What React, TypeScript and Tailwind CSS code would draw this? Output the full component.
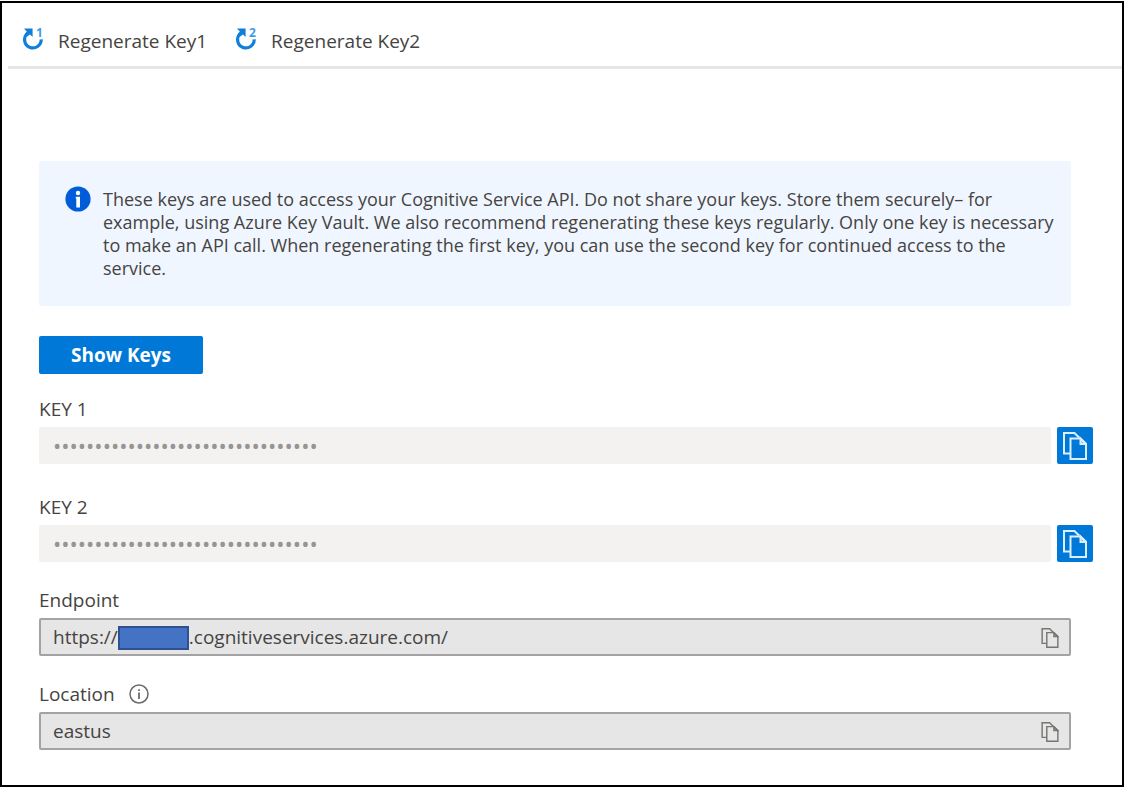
import { useId, type ReactNode } from "react";

const MASKED_KEY = "x".repeat(32);

function RegenerateIcon({ digit }: { digit: number }) {
  return (
    <svg viewBox="0 -4 24 32" className="h-8 w-6 shrink-0 overflow-visible" aria-hidden="true">
      <path
        d="M5.4 6.4A8.3 8.3 0 1 0 19.2 12.4"
        fill="none"
        stroke="#0f7fdb"
        strokeWidth="3.2"
      />
      <path d="M2 1.4H10.6V10L8 7.6 5.2 9.6 2.6 7.2 4.8 4.4Z" fill="#0f7fdb" />
      <text
        x="14"
        y="10"
        fontSize="12"
        fontWeight="700"
        fill="#3f9be4"
        fontFamily="'Open Sans', sans-serif"
      >
        {digit}
      </text>
    </svg>
  );
}

function CopyIcon({ className }: { className: string }) {
  return (
    <svg
      viewBox="0 0 24 28"
      className={className}
      fill="none"
      stroke="currentColor"
      strokeWidth="2"
      aria-hidden="true"
    >
      <path d="M7 21.5H1V1H11.5L16 5.5" />
      <path d="M7.5 6.5H17.5L23 12V27H7.5Z" />
      <path d="M17.5 6.5V12H23Z" fill="currentColor" fillOpacity="0.5" />
    </svg>
  );
}

function CommandButton({ digit }: { digit: number }) {
  return (
    <button type="button" className="flex items-center gap-3 text-[19px] leading-6">
      <RegenerateIcon digit={digit} />
      <span className="pt-1">Regenerate Key{digit}</span>
    </button>
  );
}

function KeyField({ label }: { label: string }) {
  const id = useId();
  return (
    <div>
      <label htmlFor={id} className="block text-[19px] leading-6">
        {label}
      </label>
      <div className="mt-[6px] flex gap-[6px]">
        <input
          id={id}
          type="password"
          readOnly
          value={MASKED_KEY}
          className="h-[37px] min-w-0 flex-1 rounded-xs bg-[#f3f2f1] px-[14px] pb-[2px] text-[22px] text-[#979593] outline-none"
        />
        <button
          type="button"
          aria-label={`Copy ${label}`}
          className="flex h-[37px] w-9 items-center justify-center rounded-xs bg-[#0078d7] text-[#dcefff]"
        >
          <CopyIcon className="h-7 w-6" />
        </button>
      </div>
    </div>
  );
}

function ValueField({
  label,
  value,
  hint,
  prefix,
}: {
  label: string;
  value: string;
  hint?: ReactNode;
  prefix?: ReactNode;
}) {
  const id = useId();
  return (
    <div className="mr-[22px]">
      <div className="flex items-center gap-[14px]">
        <label htmlFor={id} className="text-[19px] leading-6">
          {label}
        </label>
        {hint}
      </div>
      <div className="mt-[6px] flex h-[38px] items-center rounded-xs border-2 border-[#a3a3a3] bg-[#e6e6e6] pt-px pr-[10px] pl-3 text-[19px]">
        {prefix}
        <input
          id={id}
          readOnly
          value={value}
          className="min-w-0 flex-1 bg-transparent outline-none"
        />
        <button type="button" aria-label={`Copy ${label}`} className="text-[#777572]">
          <CopyIcon className="h-5 w-[18px]" />
        </button>
      </div>
    </div>
  );
}

export default function App() {
  return (
    <div className="flex min-h-screen flex-col bg-white pt-px font-['Open_Sans','Noto_Sans',sans-serif] text-[#454442]">
      <main className="flex-1 border-2 border-black">
        <header className="ml-[6px] flex h-[66px] gap-7 border-b-3 border-[#e6e6e6] pt-5 pl-[14px]">
          <div>
            <CommandButton digit={1} />
          </div>
          <div>
            <CommandButton digit={2} />
          </div>
        </header>

        <div className="pt-[92px] pr-[29px] pb-8 pl-[37px]">
          <section className="mr-[22px] flex gap-3 rounded-xs bg-[#f0f6ff] pt-[25px] pr-[14px] pb-[26px] pl-[26px]">
            <svg viewBox="0 0 26 26" className="h-[26px] w-[26px] shrink-0" aria-hidden="true">
              <circle cx="13" cy="13" r="12.6" fill="#015cda" />
              <circle cx="13" cy="7" r="2.2" fill="#fff" />
              <path d="M10.8 10.8H15V21.5H11.3V12.6H10.8Z" fill="#fff" />
            </svg>
            <p className="pt-[2px] text-[18px] leading-[23px]">
              These keys are used to access your Cognitive Service API. Do not share your keys.
              Store them securely– for example, using Azure Key Vault. We also recommend
              regenerating these keys regularly. Only one key is necessary to make an API call.
              When regenerating the first key, you can use the second key for continued access to
              the service.
            </p>
          </section>

          <button
            type="button"
            className="mt-[30px] h-[38px] w-[164px] rounded-xs bg-[#0078d7] text-[19px] font-bold text-white"
          >
            Show Keys
          </button>

          <div className="mt-[23px]">
            <KeyField label="KEY 1" />
          </div>
          <div className="mt-[31px]">
            <KeyField label="KEY 2" />
          </div>
          <div className="mt-[26px]">
            <ValueField
              label="Endpoint"
              value=".cognitiveservices.azure.com/"
              prefix={
                <>
                  <span>https://</span>
                  <span className="h-6 w-[71px] border-2 border-[#2f528f] bg-[#4472c4]" />
                </>
              }
            />
          </div>
          <div className="mt-[26px]">
            <ValueField
              label="Location"
              value="eastus"
              hint={
                <svg
                  viewBox="0 0 20 20"
                  className="h-5 w-5"
                  fill="none"
                  stroke="#6b6a68"
                  aria-hidden="true"
                >
                  <circle cx="10" cy="10" r="9" strokeWidth="1.5" />
                  <path d="M10 8.5V15M10 5.2V7" strokeWidth="1.8" />
                </svg>
              }
            />
          </div>
        </div>
      </main>
    </div>
  );
}
